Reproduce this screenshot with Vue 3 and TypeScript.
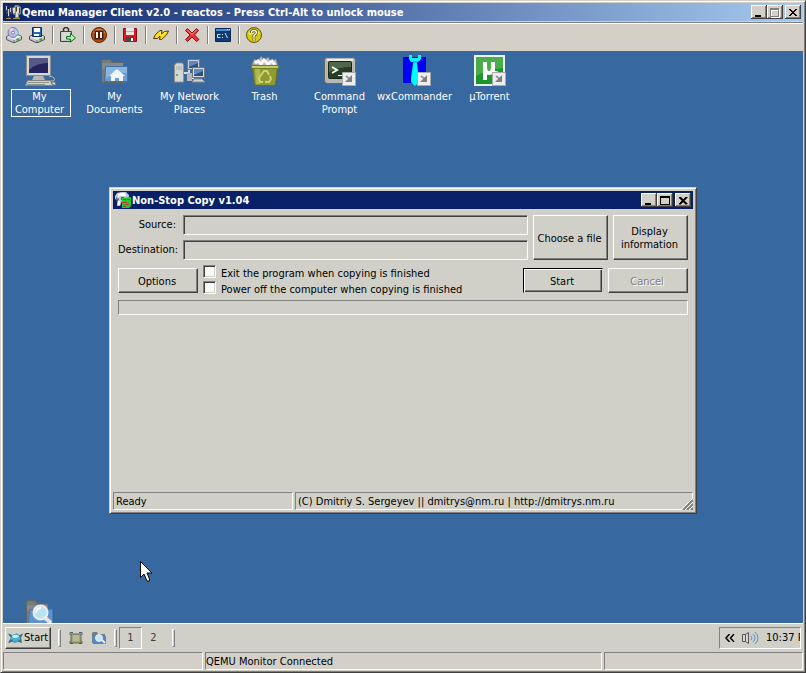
<script setup lang="ts">
import { ref } from 'vue'

const source = ref('')
const destination = ref('')
const exitWhenDone = ref(false)
const powerOffWhenDone = ref(false)
const desk = ref(1)
const selected = ref('computer')

interface Shortcut {
  id: string
  label: string
  link?: boolean
}

const shortcuts: Shortcut[] = [
  { id: 'computer', label: 'My Computer' },
  { id: 'documents', label: 'My Documents' },
  { id: 'network', label: 'My Network Places' },
  { id: 'trash', label: 'Trash' },
  { id: 'prompt', label: 'Command Prompt', link: true },
  { id: 'commander', label: 'wxCommander', link: true },
  { id: 'torrent', label: 'µTorrent', link: true },
]
</script>

<template>
  <div class="frame">
    <header class="titlebar main-title">
      <svg class="app-icon" viewBox="0 0 16 16" aria-hidden="true">
        <path d="M0 1l2 1v3h3V2l2 1v7H5v4H3v-4H1z" fill="#39424a" />
        <path d="M1 2h1v4H1zM3 5h1v7H3zM5 4h1v4H5z" fill="#c9ced0" />
        <path d="M7 4l2-1 1-2h3l3 2v7l-2 1v3h-4v-3l-2-1z" fill="#8c8b80" />
        <path d="M8 4h2v5H8zM12 3h2v6h-2zM11 8h2v5h-2z" fill="#dedccf" />
        <path d="M11 3h1v4h-1zM14 4h1v5h-1z" fill="#3d3c36" />
        <path d="M1 14h5v1H1zM8 14h7v1H8z" fill="#a8892f" />
      </svg>
      <h1>Qemu Manager Client v2.0 - reactos - Press Ctrl-Alt to unlock mouse</h1>
      <div class="caption">
        <button type="button" aria-label="Minimize"><svg viewBox="0 0 12 10"><path d="M2 7h6v2H2z" /></svg></button>
        <button type="button" aria-label="Maximize"><svg viewBox="0 0 12 10"><path d="M2 1h9v9H2zM3 3v6h7V3z" fill="#fff" fill-rule="evenodd" /><path d="M1 0h9v9H1zM2 2v6h7V2z" fill="#808080" fill-rule="evenodd" /></svg></button>
        <button type="button" aria-label="Close" class="close"><svg viewBox="0 0 12 10"><path d="M2 1h2v1h1v1h2V2h1V1h2v1H9v1H8v1H7v1h1v1h1v1h1v1H8V7H7V6H5v1H4v1H2V7h1V6h1V5h1V4H4V3H3V2H2z" /></svg></button>
      </div>
    </header>

    <nav class="toolbar" aria-label="Machine controls">
      <button type="button" aria-label="CD-ROM">
        <svg viewBox="0 0 16 16">
          <path d="M.5 9.500L5 7h6l4.500 2.500v3L9 15.500H7L.5 12.500z" fill="#c4c7c8" stroke="#555b60" />
          <path d="M1 10l7 3 7-3.500L8 7z" fill="#eceded" />
          <path d="M8 13v2" stroke="#777" />
          <circle cx="7" cy="5.500" r="5" fill="#b9bbea" stroke="#7778a6" />
          <path d="M7 5.500L3 2.500A5 5 0 0 1 7 1z" fill="#f0d6ee" />
          <path d="M7 5.500l4-2.500a5 5 0 0 1 0 5z" fill="#9fdcf0" />
          <circle cx="7" cy="5.500" r="1.500" fill="#fff" stroke="#7778a6" />
          <path d="M10.500 13l2.500-1" stroke="#2fae39" stroke-width="2" />
        </svg>
      </button>
      <button type="button" aria-label="Floppy disk">
        <svg viewBox="0 0 16 16">
          <path d="M.5 9.500L5 7h6l4.500 2.500v3L9 15.500H7L.5 12.500z" fill="#c4c7c8" stroke="#444a50" />
          <path d="M1 10l7 3 7-3.500L8 7z" fill="#e8e8e8" />
          <path d="M8 13v2" stroke="#777" />
          <path d="M3.500.5h9v9h-9z" fill="#2468b8" stroke="#0d2f66" />
          <path d="M5 1h6v4H5zM5 7h5v2H5z" fill="#fff" />
          <path d="M10.500 13l2.500-1" stroke="#2fae39" stroke-width="2" />
        </svg>
      </button>
      <span class="sep"></span>
      <button type="button" aria-label="Release">
        <svg viewBox="0 0 16 16">
          <path d="M3.500 4V2L5 .5h2L8.500 2v2" fill="none" stroke="#333" stroke-width="1.500" />
          <path d="M.5 4.500h11v10H.5z" fill="#c3c7c2" stroke="#444" />
          <path d="M2 6h8M2 8h8M2 10h5M2 12h5" stroke="#eee" />
          <path d="M6.500 9.500h4v-3l5 4.500-5 4v-3h-4z" fill="#b7f3ac" stroke="#176b24" />
        </svg>
      </button>
      <span class="sep"></span>
      <button type="button" aria-label="Pause">
        <svg viewBox="0 0 16 16">
          <circle cx="8" cy="8" r="7.500" fill="#b94e0c" stroke="#51240b" />
          <path d="M2 6a6.500 6.500 0 0 1 12 0q-6 2-12 0z" fill="#e68a46" />
          <path d="M3.500 3.500h9v9h-9z" fill="#471c10" />
          <path d="M5 5h2v6H5zM9 5h2v6H9z" fill="#fff1d9" />
        </svg>
      </button>
      <span class="sep"></span>
      <button type="button" aria-label="Save">
        <svg viewBox="0 0 16 16">
          <path d="M1.500 1.500h13v13h-12l-1-1z" fill="#e11822" stroke="#7b1219" />
          <path d="M4 1h8v7H4z" fill="#e8e8e8" />
          <path d="M4 4h8v1H4z" fill="#b0b4b6" />
          <path d="M4 10h8v5H4z" fill="#444" />
          <path d="M9 11h2v3H9z" fill="#fff" />
        </svg>
      </button>
      <span class="sep"></span>
      <button type="button" aria-label="Reset">
        <svg viewBox="0 0 16 16">
          <path d="M.5 11.500l2-4 4.500-4h2L8.500 7l3-2.500 4-.5-2 4-5 4.500h-2L7 9l-2.500 2.500z" fill="#ffd900" stroke="#4f3a0c" />
          <path d="M3 9.500L7 5l1 4 5-4" fill="none" stroke="#fff36c" />
        </svg>
      </button>
      <span class="sep"></span>
      <button type="button" aria-label="Shut down">
        <svg viewBox="0 0 16 16">
          <path d="M1.500 3.500l2-2L8 6l4.500-4.500 2 2L10.500 8l4.500 4.500-2.500 2L8 10l-4.500 4.500-2-2L6 8z" fill="#ef3438" stroke="#801417" />
          <path d="M3.500 3L8 7.500 12.500 3" fill="none" stroke="#ff8b86" />
        </svg>
      </button>
      <span class="sep"></span>
      <button type="button" aria-label="Monitor console">
        <svg viewBox="0 0 16 16">
          <path d="M.5 1.500h15v13H.5z" fill="#123a72" stroke="#0c274f" />
          <path d="M1 2h14v2H1z" fill="#458fd8" />
          <path d="M12 2h1v1h-1zM14 2h1v1h-1z" fill="#e7edf5" />
          <path d="M5.500 7.500h-3v3h3M7.500 7v1M7.500 10v1M10 6l2.500 5" fill="none" stroke="#d2dce8" />
        </svg>
      </button>
      <span class="sep"></span>
      <button type="button" aria-label="Help">
        <svg viewBox="0 0 16 16">
          <circle cx="8" cy="8" r="7.500" fill="#d5ca11" stroke="#5d570d" />
          <path d="M2 7a6.500 6.500 0 0 1 12 0q-6 2-12 0z" fill="#eee955" />
          <path d="M5.500 6V5.500q0-2 2.500-2t2.500 2Q10.500 7 8 8.500v2M8 11.500v2" fill="none" stroke="#4c480b" stroke-width="3" />
          <path d="M5.500 6V5.500q0-2 2.500-2t2.500 2Q10.500 7 8 8.500v2M8 11.500v2" fill="none" stroke="#fff" stroke-width="1.500" />
        </svg>
      </button>
    </nav>

    <main class="desktop">
      <div class="shortcuts">
        <button
          v-for="item in shortcuts"
          :key="item.id"
          type="button"
          class="shortcut"
          :class="{ selected: selected === item.id }"
          @click="selected = item.id"
        >
          <svg viewBox="0 0 32 32" aria-hidden="true">
            <template v-if="item.id === 'computer'">
              <path d="M2.500.5h24v20h-24z" fill="#d6d6d2" stroke="#8d8d8b" />
              <path d="M5 3h19v15H5z" fill="#25245c" />
              <path d="M5 3h19v5Q12 8 5 15z" fill="#555889" />
              <path d="M10 21h9l2 4H8z" fill="#b6b6b2" />
              <path d="M3.500 25.500h23l2 5H1.500z" fill="#d1d1ca" stroke="#858580" />
              <path d="M4 27.500h21M3 29.500h18" stroke="#94948f" />
              <path d="M25 22q3-2 5 1t-3 3" fill="none" stroke="#b9bab7" />
              <path d="M27 27h4l1 3h-3z" fill="#d5d5d0" stroke="#777" />
            </template>
            <template v-else-if="item.id === 'documents'">
              <path d="M2.500 27.500v-23h9l2 3h11v20z" fill="#777a7b" stroke="#626566" />
              <path d="M3 9h21M3 11h21M3 13h21" stroke="#93989a" />
              <path d="M6.500 11.500h22v15h-23z" fill="#6c9dd3" stroke="#3d73ad" />
              <path d="M7 12h21v6Q15 17 7 23z" fill="#8bb4df" />
              <path d="M18 14l8 7h-2v5h-4v-3h-4v3h-4v-5h-2z" fill="#f2f5f7" />
            </template>
            <template v-else-if="item.id === 'network'">
              <path d="M.5 10l2-2h6l1 2v17h-9z" fill="#d7d7d2" stroke="#90918e" />
              <path d="M2 12h6M2 14h6" stroke="#aaa" />
              <path d="M2 19h2v2H2z" fill="#76a36c" />
              <path d="M10 18h5M15 15v8h5" fill="none" stroke="#dadada" stroke-width="2" />
              <path d="M13.500 4.500h12v10h-12z" fill="#ccc" stroke="#72777a" />
              <path d="M15 6h9v7h-9z" fill="#285082" />
              <path d="M15 6h9v2l-9 4z" fill="#5d8ac0" />
              <path d="M13 18h5v8h-5z" fill="#b4b7b5" />
              <path d="M18.500 12.500h12v10h-12z" fill="#d9d9d6" stroke="#6d7375" />
              <path d="M20 14h9v7h-9z" fill="#285082" />
              <path d="M20 14h9v2l-9 4z" fill="#5d8ac0" />
              <path d="M20 24h8l3 3H18z" fill="#d5d5d0" stroke="#888" />
            </template>
            <template v-else-if="item.id === 'trash'">
              <path d="M3 10l2-6 4 2 3-5 3 4 4-3 3 4 5-2 2 7z" fill="#b9bcbb" stroke="#777d75" />
              <path d="M6 8l3-2 3 3 3-4 4 4 4-3 3 4" fill="none" stroke="#f6f6f6" stroke-width="3" />
              <path d="M3.500 11.500h25l-2 18-2 1h-17l-2-1z" fill="#8f9a2c" stroke="#69701e" />
              <path d="M2.500 10.500h27v3h-27z" fill="#c3c95f" stroke="#747d29" />
              <path d="M6 14h5v15H7z" fill="#b0b848" />
              <path d="M12 20l3-4h3l2 4M21 21l1 3-2 3h-4M14 27h-3l-1-4 2-3" fill="none" stroke="#ccd27c" stroke-width="2" />
            </template>
            <template v-else-if="item.id === 'prompt'">
              <rect x=".5" y="2.500" width="31" height="26" rx="3" fill="#b7b8b2" stroke="#656860" />
              <path d="M3 4h26v2H3z" fill="#ededeb" />
              <rect x="4.500" y="6.500" width="23" height="17" rx="1" fill="#283d28" stroke="#172718" />
              <path d="M5 7h22v5Q14 12 5 17z" fill="#51664b" />
              <path d="M8 12l5 3-5 3" fill="none" stroke="#efffe8" stroke-width="2" />
              <path d="M14 20.500h5" stroke="#efffe8" />
            </template>
            <template v-else-if="item.id === 'commander'">
              <path d="M4 2h23v26H4z" fill="#0000f5" />
              <path d="M10 0h3v3h6V0h3v4l-3 3h-1v2l2 15v3l-4 4-4-4v-4l2-14V7h-2l-2-3z" fill="#00faff" />
              <path d="M14 7h4" stroke="#0078ff" />
            </template>
            <template v-else>
              <path d="M0 0h31v31H0z" fill="#edf3e9" />
              <path d="M2 2h27v27H2z" fill="#1c962b" />
              <path d="M2 2h27v11Q15 14 2 21z" fill="#49ad4c" />
              <path d="M11 7v18M19 7v8q0 4 5 3M11 12q0 6 4 6t4-6" fill="none" stroke="#fff" stroke-width="4" />
            </template>
            <template v-if="item.link">
              <path d="M18.500 17.500h13v13h-13z" fill="#eee" stroke="#aaa" />
              <path d="M22 21l4 3" stroke="#999" stroke-width="2" />
              <path d="M28 20v7h-7z" fill="#808080" />
            </template>
          </svg>
          <span>{{ item.label }}</span>
        </button>
      </div>

      <button type="button" class="shortcut clipped" aria-label="Search">
        <svg viewBox="0 0 32 32" aria-hidden="true">
          <path d="M2.500 27.500v-24l1-2h8l2 3h10v23z" fill="#777a7b" stroke="#626566" />
          <path d="M3 7h21M3 9h21M3 11h21" stroke="#93989a" />
          <path d="M5.500 10.500h23v15h-24z" fill="#5e93cf" stroke="#4479b4" />
          <path d="M20 18l7 6" stroke="#e4e4e1" stroke-width="4" />
          <circle cx="16.500" cy="13.500" r="7" fill="#b9e4f3" stroke="#ececec" stroke-width="2" />
          <path d="M12 14q0-5 5-5" fill="none" stroke="#fff" stroke-width="2" />
        </svg>
      </button>

      <section class="dialog" aria-label="Non-Stop Copy">
        <header class="titlebar dialog-title">
          <svg class="app-icon" viewBox="0 0 16 16" aria-hidden="true">
            <path d="M0 4l2-3 4-1h5l3 3v4l-4 1-3 1-2 5H2V8L0 7z" fill="#bfc6d4" />
            <path d="M3 2l2-1h5l1 3H5L3 6zM3 9h2v4H3z" fill="#fff" />
            <path d="M1 5l3 2-2 4zM6 5h3v3H6z" fill="#596179" />
            <path d="M7 6l9-1v9l-2 2H7z" fill="#1dca32" />
            <path d="M8 7.500h3M12 7.500h3M7 10.500h5M10 12.500h4M8 14.500h3" stroke="#b83a24" />
          </svg>
          <h2>Non-Stop Copy v1.04</h2>
          <div class="caption">
            <button type="button" aria-label="Minimize dialog"><svg viewBox="0 0 12 10"><path d="M2 7h6v2H2z" /></svg></button>
            <button type="button" aria-label="Maximize dialog"><svg viewBox="0 0 12 10"><path d="M1 0h10v9H1zM2 2v6h8V2z" fill-rule="evenodd" /></svg></button>
            <button type="button" aria-label="Close dialog" class="close"><svg viewBox="0 0 12 10"><path d="M2 1h2v1h1v1h2V2h1V1h2v1H9v1H8v1H7v1h1v1h1v1h1v1H8V7H7V6H5v1H4v1H2V7h1V6h1V5h1V4H4V3H3V2H2z" stroke="#000" stroke-width=".5" /></svg></button>
          </div>
        </header>

        <form class="form" @submit.prevent>
          <div class="paths">
            <div class="fields">
              <label for="source">Source:</label>
              <input id="source" v-model="source" type="text" />
              <label for="destination">Destination:</label>
              <input id="destination" v-model="destination" type="text" />
            </div>
            <button type="button" class="btn tall">Choose a file</button>
            <button type="button" class="btn tall">Display information</button>
          </div>
          <div class="actions">
            <button type="button" class="btn">Options</button>
            <div class="checks">
              <label><input v-model="exitWhenDone" type="checkbox" /><span>Exit the program when copying is finished</span></label>
              <label><input v-model="powerOffWhenDone" type="checkbox" /><span>Power off the computer when copying is finished</span></label>
            </div>
            <button type="submit" class="btn default">Start</button>
            <button type="button" class="btn" disabled>Cancel</button>
          </div>
          <div class="progress" role="progressbar" aria-label="Copy progress" aria-valuenow="0"></div>
        </form>

        <footer class="dialog-status">
          <span class="pane">Ready</span>
          <span class="pane">(C) Dmitriy S. Sergeyev || dmitrys@nm.ru | http://dmitrys.nm.ru</span>
          <svg class="grip" viewBox="0 0 12 12" aria-hidden="true">
            <path d="M0 12h12V0z" fill="#d0d0c8" />
            <path d="M2 12L12 2M6 12l6-6M10 12l2-2" stroke="#808080" stroke-width="2" />
            <path d="M0 12L12 0M4 12l8-8M8 12l4-4" stroke="#fff" />
          </svg>
        </footer>
      </section>

      <svg class="pointer" viewBox="0 0 12 21" aria-hidden="true">
        <path d="M.5.500v16l3.500-3.500 3 7h2.500v-2l-2.500-6h5z" fill="#fff" stroke="#000" />
      </svg>
    </main>

    <div class="taskbar">
      <button type="button" class="start">
        <svg viewBox="0 0 16 12" aria-hidden="true">
          <path d="M0 1l5 2 4-2 3 2 4-2-2 5 1 5-4-1-3 1-4-1-4 1 3-5z" fill="#3c7f9c" />
          <ellipse cx="8" cy="6" rx="5" ry="4" fill="#4ab3d4" />
          <path d="M4 4q4-3 8 0l-3 2H6z" fill="#c5f2fa" />
          <path d="M1 2l3 3M15 2l-3 3M1 11l4-3M14 11l-3-3" fill="none" stroke="#285c80" />
        </svg>
        <span>Start</span>
      </button>
      <span class="handle"></span>
      <div class="quick">
        <button type="button" aria-label="Show desktop">
          <svg viewBox="0 0 16 16">
            <path d="M3 4h10v9H3z" fill="#a5a680" stroke="#62664c" />
            <path d="M2 5V2.500h3M11 2.500h3V5M2 11v2.500h3M11 13.500h3V11" fill="none" stroke="#4b6274" />
            <path d="M5 5h6v6H5z" fill="#b9b993" />
          </svg>
        </button>
        <button type="button" aria-label="Explorer">
          <svg viewBox="0 0 16 16">
            <path d="M1 13V3l1-1h4l1 2h7v9z" fill="#777e82" />
            <path d="M2 6h13v8H2z" fill="#4e88cb" />
            <path d="M11 10l3 3" stroke="#eee" stroke-width="2" />
            <circle cx="8" cy="8" r="3.500" fill="#c3e8f3" stroke="#e9edee" />
          </svg>
        </button>
      </div>
      <span class="handle"></span>
      <div class="desks">
        <button v-for="n in 2" :key="n" type="button" :class="{ active: desk === n }" @click="desk = n">{{ n }}</button>
      </div>
      <span class="handle last"></span>
      <div class="tray">
        <svg class="chevrons" viewBox="0 0 10 8" aria-hidden="true"><path d="M4.500 0L1 4l3.500 4M9 0L5.500 4 9 8" fill="none" stroke="#000" stroke-width="1.500" /></svg>
        <svg class="speaker" viewBox="0 0 17 14" aria-hidden="true">
          <path d="M.5 3.500h3l3-2v11l-3-2h-3z" fill="#d8d9d6" stroke="#555" />
          <path d="M3.500 3.500v7" stroke="#555" />
          <path d="M9 5q2 2 0 4M11 3q4 4 0 8M13 1q6 6 0 12" fill="none" stroke="#5a93d3" />
        </svg>
        <time>10:37 P</time>
      </div>
    </div>

    <footer class="status">
      <span class="pane"></span>
      <span class="pane">QEMU Monitor Connected</span>
      <span class="pane"></span>
    </footer>
  </div>
</template>

<style>
body {
  margin: 0;
}
</style>

<style scoped>
* {
  box-sizing: border-box;
}

.frame {
  display: flex;
  flex-direction: column;
  min-height: 100vh;
  padding: 1px;
  border: 1px solid;
  border-color: #d4d0c8 #404040 #404040 #d4d0c8;
  box-shadow: inset 1px 1px #fff, inset -1px -1px #808080;
  background: #d4d0c8;
  color: #000;
  font: 11px/13px Tahoma, "DejaVu Sans Condensed", sans-serif;
}

button,
input {
  font: inherit;
  color: inherit;
}

button {
  padding: 0;
  border: 0;
  border-radius: 0;
  background: none;
}

svg {
  display: block;
  flex: none;
}

.titlebar {
  display: flex;
  align-items: center;
  height: 18px;
  margin: 1px;
  padding: 0 2px;
  color: #fff;
}

.main-title {
  background: linear-gradient(90deg, #0a246a, #a6caf0);
}

.titlebar h1,
.titlebar h2 {
  flex: 1;
  min-width: 0;
  margin: 0;
  padding-top: 1px;
  padding-left: 1px;
  overflow: hidden;
  font-size: 11px;
  line-height: 16px;
  white-space: nowrap;
}

.titlebar h2 {
  padding-top: 2px;
}

.app-icon {
  width: 16px;
  height: 16px;
}

.caption {
  display: flex;
}

.caption button {
  width: 16px;
  height: 14px;
  padding: 1px 2px;
  background: #d4d0c8;
  box-shadow: inset -1px -1px #404040, inset 1px 1px #fff, inset -2px -2px #808080;
}

.caption svg {
  width: 12px;
  height: 10px;
  margin-top: 1px;
  shape-rendering: crispEdges;
}

.caption .close {
  margin-left: 2px;
}

.toolbar {
  display: flex;
  align-items: center;
  height: 29px;
  margin: 0 1px;
  padding-bottom: 4px;
  border-top: 1px solid #808080;
  box-shadow: inset 0 1px #fff;
}

.toolbar button {
  width: 23px;
  padding: 0 3px;
}

.toolbar svg {
  width: 16px;
  height: 16px;
}

.sep {
  width: 2px;
  height: 18px;
  margin: 0 3px;
  border-left: 1px solid #808080;
  border-right: 1px solid #fff;
}

.desktop {
  position: relative;
  display: flex;
  flex: 1;
  flex-direction: column;
  min-height: 480px;
  margin: 0 1px;
  overflow: hidden;
  background: #3868a0;
}

.shortcuts {
  display: flex;
  padding-top: 4px;
}

.shortcut {
  display: flex;
  flex-direction: column;
  align-items: center;
  width: 75px;
  color: #fff;
}

.shortcut svg {
  width: 32px;
  height: 32px;
  margin-right: 2px;
}

.shortcut span {
  min-width: 60px;
  margin-top: 2px;
  padding-right: 2px;
  border: 1px solid transparent;
}

.shortcut.selected span {
  width: 60px;
  border-color: #fff;
}

.clipped {
  height: 24px;
  margin-top: auto;
  overflow: hidden;
}

.dialog {
  position: absolute;
  top: 136px;
  left: 106px;
  display: flex;
  flex-direction: column;
  width: 588px;
  height: 327px;
  padding: 3px;
  border: 1px solid;
  border-color: #d0d0c8 #404040 #404040 #d0d0c8;
  box-shadow: inset 1px 1px #fff, inset -1px -1px #808080;
  background: #d0d0c8;
}

.dialog-title {
  flex: none;
  margin: 0;
  background: #082068;
}

.form {
  flex: 1;
  padding: 6px 5px 0;
}

.paths,
.actions {
  display: flex;
  gap: 5px;
}

.fields {
  display: grid;
  flex: 1;
  grid-template-columns: 58px 1fr;
  gap: 5px 7px;
  align-items: center;
  text-align: right;
}

.fields label {
  padding-bottom: 2px;
}

.fields input {
  width: 100%;
  height: 20px;
  padding: 2px 4px;
  border: 1px solid;
  border-color: #808080 #fff #fff #808080;
  border-radius: 0;
  outline: 0;
  background: #d0d0c8;
  box-shadow: inset 1px 1px #404040;
}

.btn {
  width: 80px;
  height: 25px;
  padding: 1px 2px 0 0;
  border: 1px solid;
  border-color: #fff #404040 #404040 #fff;
  background: #d0d0c8;
  box-shadow: inset -1px -1px #808080;
}

.tall {
  width: 75px;
  height: 45px;
}

.default {
  border-color: #000 #d0d0c8 #d0d0c8 #000;
  box-shadow: inset 1px 1px #fff, inset -1px -1px #404040, inset -2px -2px #808080;
}

.btn:disabled {
  color: #808080;
  text-shadow: 1px 1px #fff;
}

.actions {
  margin-top: 5px;
}

.actions .btn {
  margin-top: 3px;
}

.checks {
  display: flex;
  flex: 1;
  flex-direction: column;
  gap: 3px;
}

.checks label {
  display: flex;
  gap: 5px;
  height: 13px;
}

.checks span {
  line-height: 18px;
  white-space: nowrap;
}

.checks input {
  width: 13px;
  height: 13px;
  margin: 0;
  appearance: none;
  border: 1px solid;
  border-color: #808080 #fff #fff #808080;
  background: #f8f8f8;
  box-shadow: inset 1px 1px #404040, inset -1px -1px #d0d0c8;
}

.checks input:checked {
  background: #404040;
}

.progress {
  height: 15px;
  margin-top: 6px;
  border: 1px solid;
  border-color: #808080 #fff #fff #808080;
}

.pane {
  padding-left: 2px;
  overflow: hidden;
  border: 1px solid;
  border-color: #808080 #fff #fff #808080;
  line-height: 18px;
  white-space: nowrap;
}

.dialog-status {
  position: relative;
  display: grid;
  grid-template-columns: 180px 1fr;
  gap: 2px;
  height: 18px;
}

.grip {
  position: absolute;
  right: 0;
  bottom: 0;
  width: 12px;
  height: 12px;
}

.pointer {
  position: absolute;
  top: 510px;
  left: 137px;
  width: 12px;
  height: 21px;
}

.taskbar {
  display: flex;
  align-items: center;
  height: 28px;
  margin: 0 1px;
  padding: 0 2px;
  border-top: 1px solid #fff;
  background: #d0d0c8;
}

.start {
  display: flex;
  gap: 1px;
  align-items: center;
  width: 46px;
  height: 22px;
  padding-left: 2px;
  border: 1px solid;
  border-color: #fff #404040 #404040 #fff;
  box-shadow: inset -1px -1px #808080;
}

.start svg {
  width: 15px;
  height: 12px;
}

.handle {
  width: 3px;
  height: 18px;
  margin: 0 2px 0 7px;
  border: 1px solid;
  border-color: #fff #808080 #808080 #fff;
}

.quick {
  display: flex;
  gap: 7px;
  padding: 0 0 0 5px;
}

.quick svg {
  width: 16px;
  height: 16px;
}

.desks {
  display: flex;
}

.desks button {
  width: 23px;
  height: 22px;
  border: 1px solid transparent;
  color: #404040;
}

.desks .active {
  border-color: #808080 #fff #fff #808080;
}

.tray {
  display: flex;
  align-items: center;
  width: 82px;
  height: 22px;
  margin-left: auto;
  padding-left: 5px;
  overflow: hidden;
  border: 1px solid;
  border-color: #808080 #fff #fff #808080;
  white-space: nowrap;
}

.chevrons {
  width: 10px;
  height: 8px;
}

.speaker {
  width: 17px;
  height: 14px;
  margin: 0 7px;
}

.status {
  display: grid;
  grid-template-columns: 200px 2fr 1fr;
  gap: 2px;
  height: 18px;
  margin: 1px;
}

.status .pane {
  padding-left: 0;
}
</style>
